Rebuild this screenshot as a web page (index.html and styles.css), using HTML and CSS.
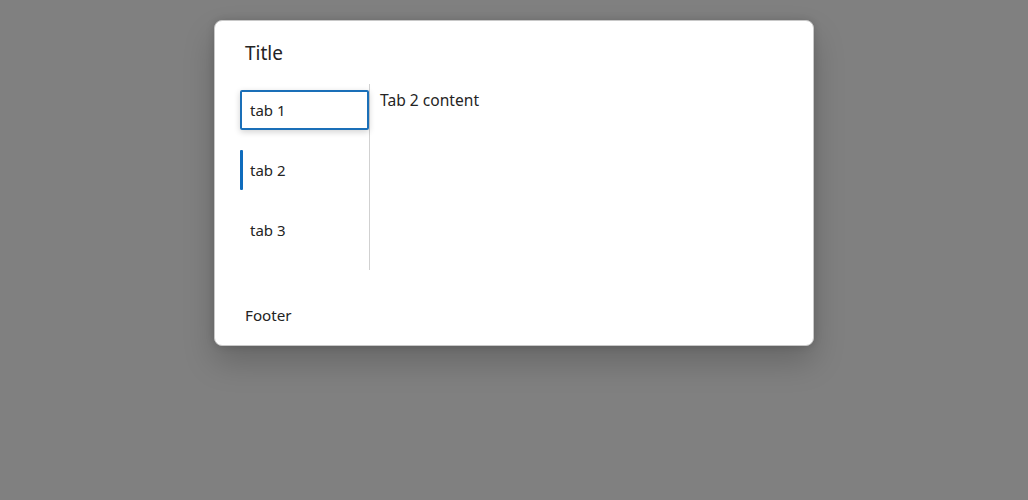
FILE: index.html
```html
<!DOCTYPE html>
<html>
<head>
<meta charset="utf-8">
<link rel="stylesheet" href="styles.css">
</head>
<body>
<div class="overlay">
  <div class="dialog">
    <div class="title">Title</div>
    <div class="body">
      <div class="tablist">
        <div class="tab focused">tab 1</div>
        <div class="tab selected">tab 2</div>
        <div class="tab">tab 3</div>
      </div>
      <div class="panel">Tab 2 content</div>
    </div>
    <div class="footer">Footer</div>
  </div>
</div>
</body>
</html>
```

FILE: styles.css
```css
html, body {
  margin: 0;
  height: 100%;
}
body {
  background: #808080;
  font-family: "Noto Sans", "Open Sans", sans-serif;
  color: #242424;
}
.overlay {
  display: flex;
  justify-content: center;
  padding-top: 20px;
}
.dialog {
  width: 600px;
  height: 326px;
  box-sizing: border-box;
  background: #fff;
  border: 1px solid #c8c8c8;
  border-radius: 8px;
  padding: 18px 24px 20px 25px;
  box-shadow: 0 0 8px rgba(0,0,0,0.14), 0 16px 32px rgba(0,0,0,0.2);
  display: flex;
  flex-direction: column;
}
.title {
  font-size: 19px;
  line-height: 28px;
  padding-left: 5px;
}
.body {
  display: flex;
  margin-top: 17px;
}
.tablist {
  width: 129px;
  border-right: 1px solid #d1d1d1;
  padding: 6px 0 20px;
  display: flex;
  flex-direction: column;
  gap: 20px;
}
.tab {
  height: 40px;
  box-sizing: border-box;
  padding-left: 10px;
  font-size: 15px;
  line-height: 40px;
  position: relative;
}
.tab.focused {
  border: 2px solid #1a6fb8;
  border-radius: 2px;
  line-height: 36px;
  padding-left: 8px;
  box-shadow: 0 2px 6px rgba(0,0,0,0.18);
}
.tab.selected::before {
  content: "";
  position: absolute;
  left: 0;
  top: 0;
  bottom: 0;
  width: 3px;
  background: #0f6cbd;
  border-radius: 1px;
}
.panel {
  padding: 6px 0 0 10px;
  font-size: 15.6px;
  line-height: 20px;
}
.footer {
  margin-top: 35px;
  padding-left: 5px;
  font-size: 15.2px;
  line-height: 20px;
}
```
